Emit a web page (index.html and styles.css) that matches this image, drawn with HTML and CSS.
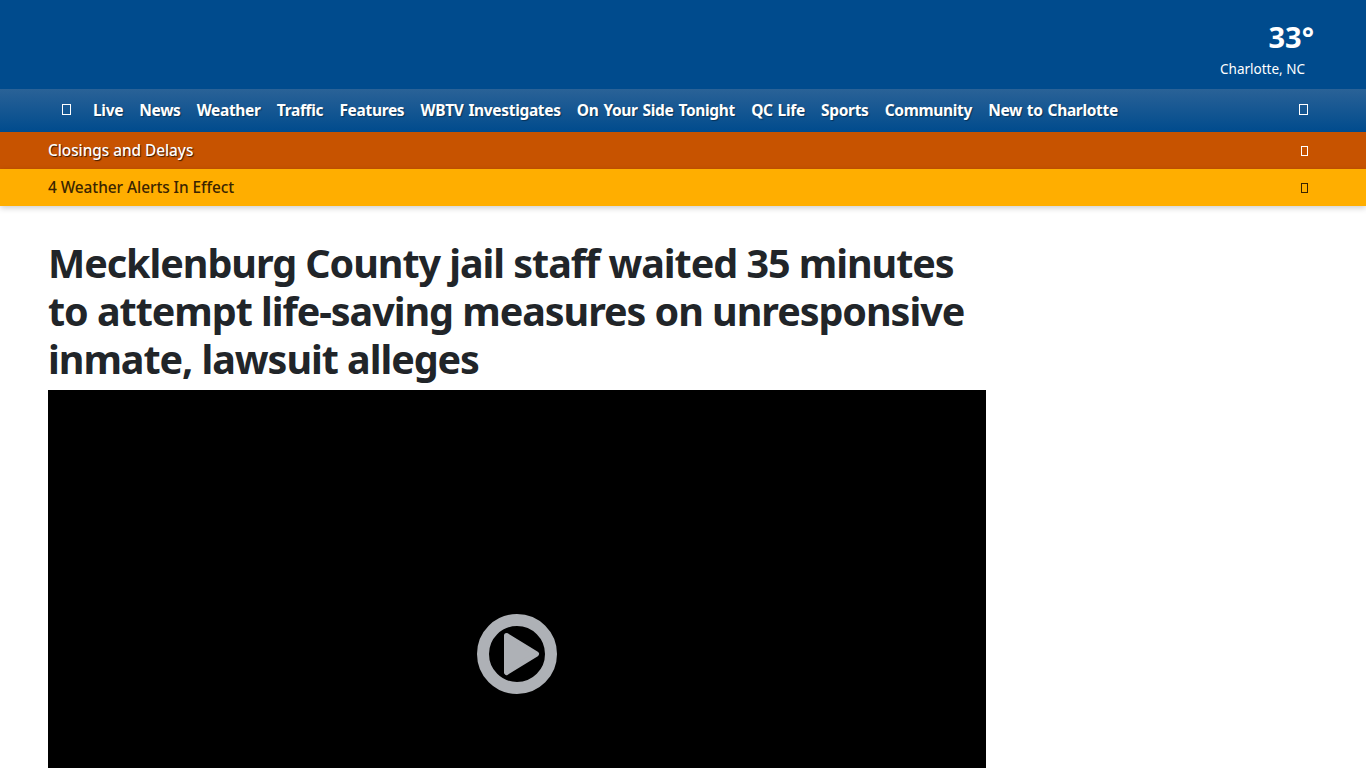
FILE: index.html
```html
<!DOCTYPE html>
<html lang="en">
<head>
    <meta charset="UTF-8">
    <meta name="viewport" content="width=device-width, initial-scale=1.0">
    <title>Mecklenburg County jail staff waited 35 minutes</title>
    <link rel="stylesheet" href="styles.css">
</head>
<body>
    <header class="masthead">
        <div class="weather">
            <div class="temp">33°</div>
            <div class="city">Charlotte, NC</div>
        </div>
    </header>
    <nav class="main-nav">
        <span class="tofu tofu-nav nav-menu"></span>
        <a href="#">Live</a>
        <a href="#">News</a>
        <a href="#">Weather</a>
        <a href="#">Traffic</a>
        <a href="#">Features</a>
        <a href="#">WBTV Investigates</a>
        <a href="#">On Your Side Tonight</a>
        <a href="#">QC Life</a>
        <a href="#">Sports</a>
        <a href="#">Community</a>
        <a href="#">New to Charlotte</a>
        <span class="tofu tofu-nav nav-search"></span>
    </nav>
    <div class="strip strip-closings">
        <span>Closings and Delays</span>
        <span class="tofu"></span>
    </div>
    <div class="strip strip-alerts">
        <span>4 Weather Alerts In Effect</span>
        <span class="tofu"></span>
    </div>
    <main class="story">
        <h1>Mecklenburg County jail staff waited 35 minutes to attempt life-saving measures on unresponsive inmate, lawsuit alleges</h1>
        <div class="video">
            <svg class="play" width="80" height="80" viewBox="0 0 80 80">
                <circle cx="40" cy="40" r="34" fill="none" stroke="#aeb1b6" stroke-width="12"/>
                <path d="M29.5 21.5 L59.5 40 L29.5 58.5 Z" fill="#aeb1b6" stroke="#aeb1b6" stroke-width="5" stroke-linejoin="round"/>
            </svg>
        </div>
    </main>
</body>
</html>
```
FILE: styles.css
```css
body {
    margin: 0;
    font-family: "Noto Sans", "Open Sans", sans-serif;
    background-color: #fff;
    color: #212529;
}
.masthead {
    height: 89px;
    background-color: #004b8d;
    display: flex;
    justify-content: flex-end;
    box-sizing: border-box;
    padding: 20px 52px 0 0;
}
.weather {
    color: #fff;
    text-align: right;
}
.temp {
    font-size: 29px;
    line-height: 34px;
    font-weight: 700;
}
.city {
    font-size: 13.5px;
    line-height: 18px;
    margin-top: 6px;
    margin-right: 9px;
}
.main-nav {
    height: 43px;
    display: flex;
    align-items: center;
    padding: 0 58px 2px 62px;
    box-sizing: border-box;
    background: linear-gradient(#2a6297, #004b8d);
}
.main-nav a {
    color: #fff;
    font-size: 15.5px;
    font-weight: 700;
    letter-spacing: -0.33px;
    word-spacing: 1.2px;
    text-decoration: none;
    margin-right: 16.2px;
    text-shadow: 1px 1px 1px rgba(0, 0, 0, .4);
}
.tofu {
    display: block;
    width: 5px;
    height: 8px;
    border: 1px solid currentColor;
}
.tofu-nav {
    width: 7px;
    height: 9px;
    color: #fff;
}
.nav-menu {
    margin-right: 22px;
}
.nav-search {
    margin-left: auto;
}
.strip {
    height: 37px;
    display: flex;
    align-items: center;
    justify-content: space-between;
    box-sizing: border-box;
    padding: 0 58px 0 48px;
    font-size: 15.4px;
    font-weight: 500;
    letter-spacing: -0.05px;
}
.strip-closings {
    background-color: #c75300;
    color: #fff;
    text-shadow: 1px 1px 1px rgba(0, 0, 0, .7);
}
.strip-alerts {
    background-color: #ffae00;
    color: #3a2400;
    box-shadow: 0 2px 6px rgba(0, 0, 0, .2);
}
.story {
    width: 938px;
    margin-left: 48px;
    padding-top: 33px;
}
h1 {
    margin: 0 0 7px;
    font-size: 39.5px;
    line-height: 48px;
    font-weight: 700;
    letter-spacing: -1.05px;
}
.video {
    height: 528px;
    background-color: #000;
    display: flex;
    align-items: center;
    justify-content: center;
}
```
